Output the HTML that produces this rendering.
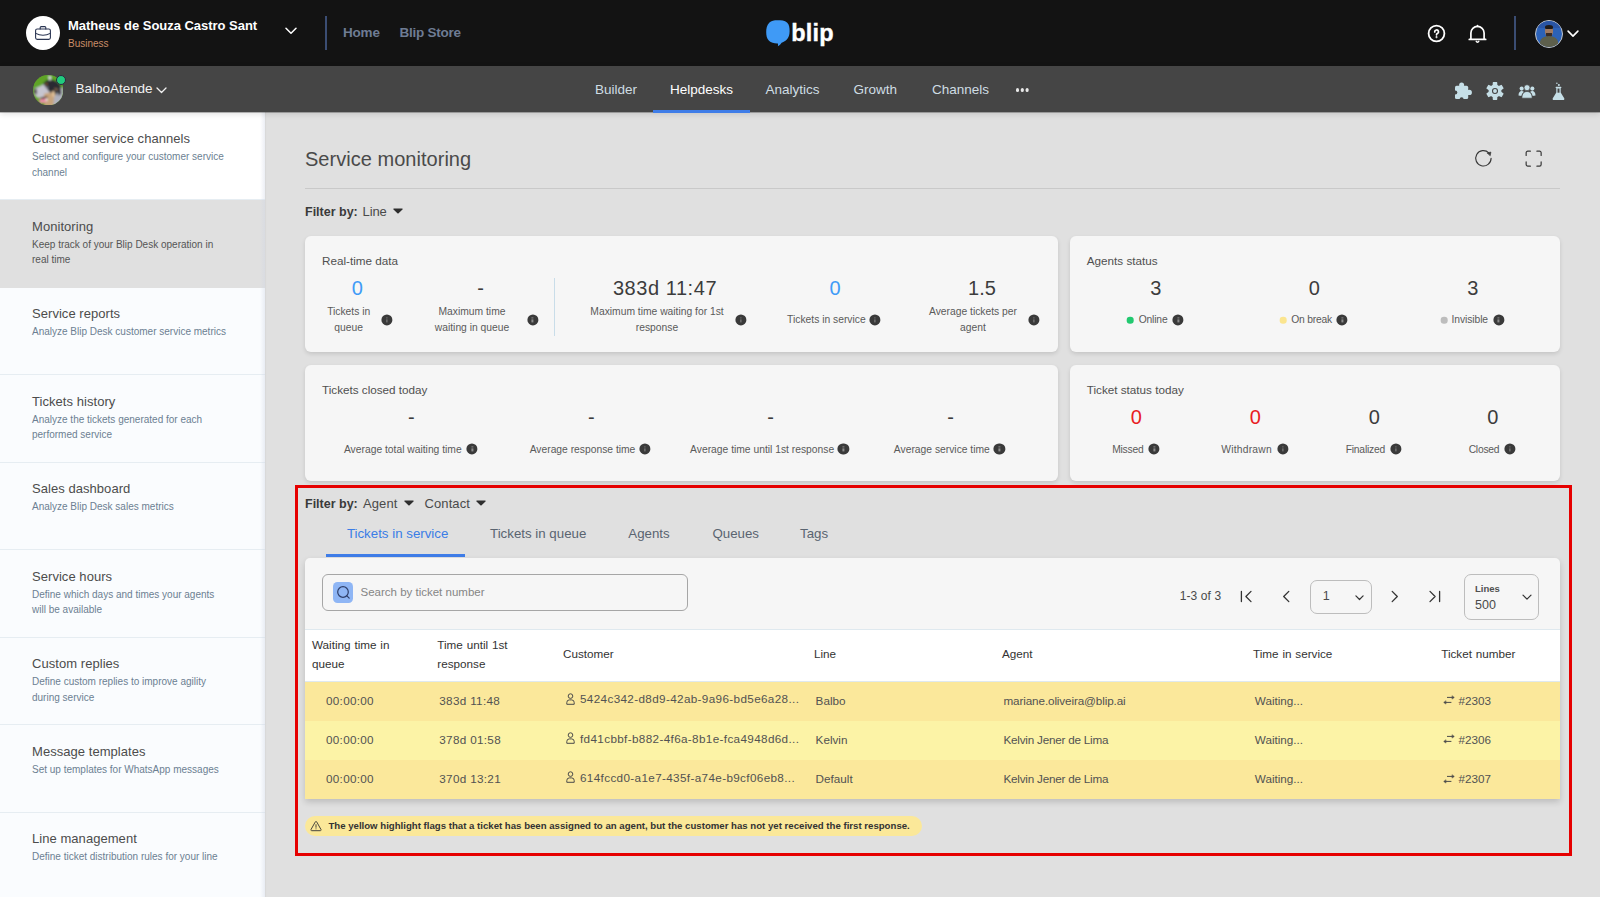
<!DOCTYPE html>
<html>
<head>
<meta charset="utf-8">
<title>Service monitoring</title>
<style>
*{box-sizing:border-box;margin:0;padding:0}
html,body{width:1600px;height:897px;overflow:hidden}
body{font-family:"Liberation Sans",sans-serif;background:#e0e0e0;color:#4a4a4a;position:relative}
.a{position:absolute;white-space:nowrap}
.c{position:absolute;white-space:nowrap;transform:translateX(-50%);text-align:center}
#top{position:absolute;left:0;top:0;width:1600px;height:66px;background:#131313}
#sub{position:absolute;left:0;top:66px;width:1600px;height:46.400px;background:#454545;box-shadow:0 .5px 0 rgba(0,0,0,.5),0 2px 6px rgba(0,0,0,.13);z-index:5}
#side{position:absolute;left:0;top:112px;width:265px;height:785px;background:#fafcfe;box-shadow:1px 0 1px rgba(0,0,0,.03)}
.si{position:absolute;left:0;width:265px;height:87.55px;border-bottom:1px solid #e6edf2}
.si .t{position:absolute;left:32px;top:18.5px;font-size:13px;line-height:16px;color:#4c4c4c;letter-spacing:.05px}
.si .d{position:absolute;left:32px;top:36.5px;font-size:10px;line-height:15.6px;color:#6c7f92;white-space:pre}
.card{position:absolute;background:#f6f6f6;border-radius:6px;box-shadow:0 2px 4px rgba(0,0,0,.12)}
.ct{font-size:11.7px;color:#505050}
.big{font-size:20px;color:#3c3c3c;line-height:24px}
.lbl{font-size:10.3px;color:#5a5a5a;line-height:16px}
.info{position:absolute;width:11.200px;height:11.200px;border-radius:50%;background:#3a3a3a;transform:translate(-50%,-50%)}
.info:before{content:"";position:absolute;left:4.900px;top:4.800px;width:1.500px;height:3.400px;background:#8c8c8c}
.info:after{content:"";position:absolute;left:4.900px;top:2.700px;width:1.500px;height:1.400px;background:#8c8c8c}
.dot{position:absolute;width:6.6px;height:6.6px;border-radius:50%;transform:translate(-50%,-50%)}
.tab{top:14.500px;font-size:13.500px;line-height:18px;color:#cfdde4}
.si.act .d{color:#555}
.si.act{border-bottom-color:#e0e0e0}
.caret{width:10px;height:6px;background:none}
</style>
</head>
<body>
<!-- TOP BAR -->
<div id="top">
  <div class="a" style="left:26px;top:16px;width:34px;height:34px;border-radius:50%;background:#fff"></div>
  <svg class="a" style="left:34px;top:24px" width="18" height="18" viewBox="0 0 18 18" fill="none" stroke="#2a3552" stroke-width="1.1" stroke-linecap="round" stroke-linejoin="round"><rect x="1.6" y="5" width="14.8" height="10.4" rx="1.6"/><path d="M6.2 5V3.6a1 1 0 0 1 1-1h3.6a1 1 0 0 1 1 1V5"/><path d="M1.8 9.4c2.2 1.3 4.6 1.9 7.2 1.9s5-.6 7.2-1.9"/></svg>
  <div class="a" style="left:68px;top:18px;font-size:13px;line-height:15px;font-weight:700;color:#fff;letter-spacing:-.03px">Matheus de Souza Castro Sant</div>
  <div class="a" style="left:68px;top:38px;font-size:10px;line-height:12px;color:#c98d68">Business</div>
  <svg class="a" style="left:285px;top:27px" width="12" height="8" viewBox="0 0 12 8" fill="none" stroke="#fff" stroke-width="1.5" stroke-linecap="round" stroke-linejoin="round"><path d="M1 1.2l5 5 5-5"/></svg>
  <div class="a" style="left:325px;top:16px;width:1.5px;height:34px;background:#3b4d73"></div>
  <div class="a" style="left:343px;top:24.7px;font-size:13.5px;line-height:16px;font-weight:700;color:#6e7c93;letter-spacing:-.2px">Home</div>
  <div class="a" style="left:399.5px;top:24.7px;font-size:13.5px;line-height:16px;font-weight:700;color:#6e7c93;letter-spacing:-.25px">Blip Store</div>
  <!-- logo -->
  <svg class="a" style="left:765px;top:19px" width="26" height="29" viewBox="0 0 26 29"><path d="M12.400 1.300c3.800 0 7.300.2 9.600 2.300 2.400 2.200 2.600 5.400 2.600 8.600 0 3.400-.8 6.300-3 8.500-1.500 1.500-3.300 2.400-5 3-.9 1.500-2.100 2.700-3.700 3.500.2-1 .2-1.900 0-2.800-3.600.1-6.800-.6-8.900-2.600C1.800 19.700 1.200 16.600 1.200 13c0-3.600.7-7 3-9.300C6.300 1.600 9.200 1.300 12.400 1.300z" fill="#3f9af6"/></svg>
  <div class="a" style="left:791.300px;top:18.200px;font-size:23.500px;line-height:30px;font-weight:700;color:#fff;letter-spacing:.15px;-webkit-text-stroke:.35px #fff">blip</div>
  <!-- right icons -->
  <svg class="a" style="left:1426.500px;top:23.500px" width="19" height="19" viewBox="0 0 19 19" fill="none" stroke="#fff" stroke-width="1.800"><circle cx="9.500" cy="9.500" r="7.900"/><path d="M7.700 7.900a1.900 1.900 0 1 1 2.700 1.700c-.6.300-.9.600-.9 1.200" stroke-width="1.700" stroke-linecap="round"/><circle cx="9.500" cy="13.100" r=".75" fill="#fff" stroke-width=".6"/></svg>
  <svg class="a" style="left:1467px;top:23px" width="21" height="21" viewBox="0 0 21 21" fill="none" stroke="#fff" stroke-width="1.700" stroke-linecap="round" stroke-linejoin="round"><path d="M3.900 15.900V10a6.600 6.600 0 0 1 13.200 0v5.900"/><path d="M2.300 16.400h16.400"/><path d="M9.200 18.300a1.400 1.400 0 0 0 2.600 0" stroke-width="1.400"/><path d="M10.500 2.500v.8"/></svg>
  <div class="a" style="left:1514px;top:16px;width:1.500px;height:34px;background:#3b4d73"></div>
  <div class="a" style="left:1535px;top:19.500px;width:28px;height:28px;border-radius:50%;background:#2c62b8;border:1.300px solid #c4c6c9;overflow:hidden">
    <div class="a" style="left:-2px;top:-2px;width:30px;height:9px;background:#2a55a4"></div>
    <div class="a" style="left:9px;top:5.500px;width:8px;height:10px;border-radius:45%;background:#a07a62"></div>
    <div class="a" style="left:9px;top:4.500px;width:8px;height:4px;border-radius:50% 50% 20% 20%;background:#1f1a18"></div>
    <div class="a" style="left:10px;top:12.500px;width:6px;height:3.500px;border-radius:0 0 50% 50%;background:#3a2c26"></div>
    <div class="a" style="left:4px;top:15.800px;width:18px;height:12px;border-radius:50% 50% 0 0;background:#5d5f4c"></div>
  </div>
  <svg class="a" style="left:1566.500px;top:30px" width="12" height="8" viewBox="0 0 12 8" fill="none" stroke="#fff" stroke-width="1.600" stroke-linecap="round" stroke-linejoin="round"><path d="M1.100 1.100l4.900 5 4.900-5"/></svg>
</div>
<!-- SUB BAR -->
<div id="sub">
  <!-- dog avatar -->
  <svg class="a" style="left:33px;top:8.700px" width="30.400" height="30.400" viewBox="0 0 30 30">
    <defs><clipPath id="dc"><circle cx="15" cy="15" r="15"/></clipPath><filter id="db" x="-10%" y="-10%" width="120%" height="120%"><feGaussianBlur stdDeviation=".8"/></filter></defs>
    <g clip-path="url(#dc)"><rect width="30" height="30" fill="#5d9f27"/>
    <g filter="url(#db)">
      <path d="M0 0h30v13H0z" fill="#5ea426"/>
      <path d="M1 13.500l7-3 4.500-2.500 3 3 3 6-2.500 5-7 1-5-.5-3-3.500z" fill="#c6c5d0"/>
      <path d="M1.500 14l1.800-.6.700 3.600-.8 2.500-1.700-1.500z" fill="#3a3536"/>
      <path d="M10 8.500l3-3 5-1 6 2 3.500 4 .5 8-3 3-4-1-4-3-4-5z" fill="#2a2c30"/>
      <path d="M12.500 8.300l1.300-.5.600 1.400-1.300.8z" fill="#b06a28"/>
      <path d="M15 1l1 4.500h1.500L18 1z" fill="#dcdce2"/>
      <path d="M11 18.500l6-1.500 5 3 1 5-3 6h-8l-2-5z" fill="#c8a47d"/>
      <path d="M18.700 16.500l2-1 1 3-.8 3.300-1.600-.5z" fill="#eccb9f"/>
      <path d="M5 24.800l6-2.300 3 1-.8 3.200-5.500 1.800z" fill="#ea90a6"/>
      <path d="M7.500 22.300l6.500-1.300.5 1.600-6.500 1.300z" fill="#4a2e2c"/>
      <path d="M12.600 23l1.400-.3.300 2.600-1.400.6z" fill="#f1f1f1"/>
      <path d="M21 21.500l3-4 2.500-5.500 3.500 1v13l-6 5-4-1z" fill="#b0b2be"/>
      <path d="M24 11.500l3-1 .8 8-2.800 2z" fill="#2c2d32"/>
      <path d="M21.500 12.500l3.500 1.500-.5 1.300-3.500-1z" fill="#8a6a4e"/>
      <circle cx="14.300" cy="12.200" r=".9" fill="#8d8fa0"/>
    </g></g>
  </svg>
  <div class="a" style="left:55.500px;top:9.300px;width:10px;height:10px;border-radius:50%;background:#21cb7e;border:1px solid #2b2840"></div>
  <div class="a" style="left:75.500px;top:14px;font-size:13.500px;line-height:18px;color:#f2f2f2;letter-spacing:-.02px">BalboAtende</div>
  <svg class="a" style="left:156px;top:21px" width="11" height="7" viewBox="0 0 11 7" fill="none" stroke="#f2f2f2" stroke-width="1.300" stroke-linecap="round" stroke-linejoin="round"><path d="M1 1l4.500 4.500L10 1"/></svg>
  <!-- tabs -->
  <div class="a tab" style="left:595px">Builder</div>
  <div class="a tab" style="left:670px;color:#fff">Helpdesks</div>
  <div class="a tab" style="left:765.500px">Analytics</div>
  <div class="a tab" style="left:853.500px">Growth</div>
  <div class="a tab" style="left:932px">Channels</div>
  <div class="a" style="left:653px;top:43.500px;width:96.500px;height:3px;background:#3f7de8"></div>
  <div class="a" style="left:1016px;top:22.200px;width:3.400px;height:3.400px;border-radius:50%;background:#e8e8e8;box-shadow:4.800px 0 0 #e8e8e8,9.600px 0 0 #e8e8e8"></div>
  <!-- right icons -->
  <svg class="a" style="left:1453.800px;top:15.800px" width="19" height="18" viewBox="0 0 19 18"><rect x="1" y="3.800" width="13.200" height="13.200" rx="1.600" fill="#c6dfe7"/><circle cx="7.600" cy="3" r="2.500" fill="#c6dfe7"/><circle cx="15.300" cy="10.400" r="2.600" fill="#c6dfe7"/><circle cx="1.300" cy="10.400" r="2" fill="#454545"/><circle cx="7.600" cy="17.300" r="2" fill="#454545"/></svg>
  <svg class="a" style="left:1486px;top:15.900px" width="18" height="18" viewBox="0 0 18 18"><path d="M7.28 3.36L7.40 0.75L10.60 0.75L10.72 3.36L13.02 4.69L15.34 3.49L16.94 6.27L14.75 7.67L14.75 10.33L16.94 11.73L15.34 14.51L13.02 13.31L10.72 14.64L10.60 17.25L7.40 17.25L7.28 14.64L4.98 13.31L2.66 14.51L1.06 11.73L3.25 10.33L3.25 7.67L1.06 6.27L2.66 3.49L4.98 4.69z" fill="#c6dfe7" stroke="#c6dfe7" stroke-width="1.300" stroke-linejoin="round"/><circle cx="9" cy="9" r="2.500" fill="#c6dfe7" stroke="#454545" stroke-width="1.100"/></svg>
  <svg class="a" style="left:1518px;top:17.500px" width="18" height="15" viewBox="0 0 18 15" fill="#c6dfe7"><circle cx="3.700" cy="4.600" r="2.100"/><path d="M.5 11.600c0-2.800 1.300-4.500 3.200-4.500 1 0 1.700.4 2.200 1-1.400 1-2.200 2.400-2.400 4z"/><circle cx="14.300" cy="4.600" r="2.100"/><path d="M17.500 11.600c0-2.800-1.300-4.500-3.200-4.500-1 0-1.700.4-2.200 1 1.400 1 2.200 2.400 2.400 4z"/><circle cx="9" cy="3.700" r="3" stroke="#454545" stroke-width=".7"/><path d="M3.900 13.500c0-3.800 2.100-6 5.100-6s5.100 2.200 5.100 6c0 .4-.2.700-.6.700H4.500c-.4 0-.6-.3-.6-.7z" stroke="#454545" stroke-width=".7"/></svg>
  <svg class="a" style="left:1551.500px;top:15.500px" width="13" height="19" viewBox="0 0 13 19"><path d="M4.300 5.400h4.400v5l3.500 5.900c.5.900 0 1.800-1 1.800H1.800c-1 0-1.500-.9-1-1.800l3.500-5.900z" fill="#c6dfe7"/><rect x="5.500" y="6.500" width="2" height="4.200" fill="#454545"/><rect x="3.600" y="4.800" width="5.800" height="1.300" rx=".6" fill="#c6dfe7"/><circle cx="4.900" cy="1.200" r=".75" fill="#c6dfe7"/><circle cx="6.900" cy="3" r="1" fill="#c6dfe7"/></svg>
</div>
<!-- SIDEBAR -->
<div id="side">
  <div class="si" style="top:0.45px;background:#fff"><div class="t">Customer service channels</div><div class="d">Select and configure your customer service
channel</div></div>
  <div class="si act" style="top:88.00px;background:#e0e0e0"><div class="t">Monitoring</div><div class="d">Keep track of your Blip Desk operation in
real time</div></div>
  <div class="si" style="top:175.55px"><div class="t">Service reports</div><div class="d">Analyze Blip Desk customer service metrics</div></div>
  <div class="si" style="top:263.10px"><div class="t">Tickets history</div><div class="d">Analyze the tickets generated for each
performed service</div></div>
  <div class="si" style="top:350.65px"><div class="t">Sales dashboard</div><div class="d">Analyze Blip Desk sales metrics</div></div>
  <div class="si" style="top:438.20px"><div class="t">Service hours</div><div class="d">Define which days and times your agents
will be available</div></div>
  <div class="si" style="top:525.75px"><div class="t">Custom replies</div><div class="d">Define custom replies to improve agility
during service</div></div>
  <div class="si" style="top:613.30px"><div class="t">Message templates</div><div class="d">Set up templates for WhatsApp messages</div></div>
  <div class="si" style="top:700.85px"><div class="t">Line management</div><div class="d">Define ticket distribution rules for your line</div></div>
</div>
<div class="a" style="left:260px;top:112px;width:5px;height:785px;background:linear-gradient(to right,rgba(205,212,228,0),rgba(205,212,228,.38));z-index:2"></div>
<!-- MAIN -->
<div id="main">
  <div class="a" style="left:305px;top:146.700px;font-size:20px;line-height:24px;color:#4a4a4a;letter-spacing:.03px">Service monitoring</div>
  <svg class="a" style="left:1473px;top:148px" width="21" height="21" viewBox="0 0 21 21" fill="none" stroke="#383838" stroke-width="1.150" stroke-linecap="round" stroke-linejoin="round"><path d="M18.100 10.300a7.700 7.700 0 1 1-2.300-5.500"/><path d="M14.300 4.900l3.600-.9-.6 3.500z" fill="#383838" stroke-width=".6"/></svg>
  <svg class="a" style="left:1524.600px;top:149.600px" width="17.300" height="17.300" viewBox="0 0 18 18" fill="none" stroke="#383838" stroke-width="1.250" stroke-linecap="round" stroke-linejoin="round"><path d="M1.200 5.600V2.900a1.700 1.700 0 0 1 1.700-1.700h2.700M12.400 1.200h2.700a1.700 1.700 0 0 1 1.700 1.700v2.700M16.800 12.400v2.700a1.700 1.700 0 0 1-1.700 1.700h-2.700M5.600 16.800H2.900a1.700 1.700 0 0 1-1.700-1.700v-2.700"/></svg>
  <div class="a" style="left:305px;top:188px;width:1255px;height:1px;background:#c9c9c9"></div>
  <div class="a" style="left:305px;top:203.500px;font-size:12.500px;line-height:16px;color:#4a4a4a"><b style="color:#3a3a3a">Filter by:</b></div>
  <div class="a" style="left:362.500px;top:203.500px;font-size:13px;line-height:16px;color:#4a4a4a;letter-spacing:-.1px">Line</div>
  <svg class="a" style="left:392.7px;top:207.5px" width="10" height="6" viewBox="0 0 10 6"><path d="M1 .4h8a.7.700 0 0 1 .5 1.200L5.600 5.300a.85.850 0 0 1-1.200 0L.5 1.600A.7.700 0 0 1 1 .4z" fill="#2e2e2e"/></svg>
  <!-- CARDS -->
  <div class="card" style="left:305px;top:236px;width:752.500px;height:116px"></div>
  <div class="a ct" style="left:322px;top:254px">Real-time data</div>
  <div class="c big" style="left:357.2px;top:276px;color:#3f9bf7">0</div>
  <div class="c big" style="left:480.5px;top:276px">-</div>
  <div class="c big" style="left:665px;top:276px;letter-spacing:.55px">383d 11:47</div>
  <div class="c big" style="left:835px;top:276px;color:#3f9bf7">0</div>
  <div class="c big" style="left:982px;top:276px">1.5</div>
  <div class="c lbl" style="left:348.7px;top:304.400px">Tickets in<br>queue</div>
  <i class="info" style="left:386.7px;top:320px"></i>
  <div class="c lbl" style="left:472px;top:304.400px">Maximum time<br>waiting in queue</div>
  <i class="info" style="left:532.5px;top:320px"></i>
  <div class="a" style="left:554px;top:278px;width:1px;height:58px;background:#c9dde9"></div>
  <div class="c lbl" style="left:657px;top:304.400px">Maximum time waiting for 1st<br>response</div>
  <i class="info" style="left:740.7px;top:320px"></i>
  <div class="c lbl" style="left:826.4px;top:311.5px">Tickets in service</div>
  <i class="info" style="left:875px;top:320px"></i>
  <div class="c lbl" style="left:973px;top:304.400px">Average tickets per<br>agent</div>
  <i class="info" style="left:1034px;top:320px"></i>
  <div class="card" style="left:1070px;top:236px;width:490px;height:116px"></div>
  <div class="a ct" style="left:1086.800px;top:254px">Agents status</div>
  <div class="c big" style="left:1155.9px;top:276px">3</div>
  <div class="c big" style="left:1314.4px;top:276px">0</div>
  <div class="c big" style="left:1472.8px;top:276px">3</div>
  <i class="dot" style="left:1130.4px;top:320px;background:#22c970"></i>
  <div class="a lbl" style="left:1138.7px;top:311.5px;letter-spacing:-0.17px">Online</div>
  <i class="info" style="left:1178.2px;top:320px"></i>
  <i class="dot" style="left:1283px;top:320px;background:#fbe58f"></i>
  <div class="a lbl" style="left:1291.3px;top:311.5px;letter-spacing:-0.2px">On break</div>
  <i class="info" style="left:1342.2px;top:320px"></i>
  <i class="dot" style="left:1444px;top:320px;background:#bdbdbd"></i>
  <div class="a lbl" style="left:1451.5px;top:311.5px;letter-spacing:-0.08px">Invisible</div>
  <i class="info" style="left:1498.6px;top:320px"></i>
  <div class="card" style="left:305px;top:365px;width:752.500px;height:116px"></div>
  <div class="a ct" style="left:322px;top:383px">Tickets closed today</div>
  <div class="c big" style="left:411.4px;top:405px">-</div>
  <div class="c big" style="left:591.3px;top:405px">-</div>
  <div class="c big" style="left:770.7px;top:405px">-</div>
  <div class="c big" style="left:950.6px;top:405px">-</div>
  <div class="c lbl" style="left:402.8px;top:441.800px">Average total waiting time</div>
  <i class="info" style="left:472.3px;top:449.3px"></i>
  <div class="c lbl" style="left:582.5px;top:441.800px">Average response time</div>
  <i class="info" style="left:645px;top:449.3px"></i>
  <div class="c lbl" style="left:762.1500000000001px;top:441.800px">Average time until 1st response</div>
  <i class="info" style="left:843.4px;top:449.3px"></i>
  <div class="c lbl" style="left:941.85px;top:441.800px">Average service time</div>
  <i class="info" style="left:999.4px;top:449.3px"></i>
  <div class="card" style="left:1070px;top:365px;width:490px;height:116px"></div>
  <div class="a ct" style="left:1086.800px;top:383px">Ticket status today</div>
  <div class="c big" style="left:1136.3px;top:405px;color:#e8201f">0</div>
  <div class="c big" style="left:1255.2px;top:405px;color:#e8201f">0</div>
  <div class="c big" style="left:1374.2px;top:405px">0</div>
  <div class="c big" style="left:1492.8px;top:405px">0</div>
  <div class="c lbl" style="left:1127.85px;top:441.900px;letter-spacing:-0.2px">Missed</div>
  <i class="info" style="left:1154.2px;top:449.3px"></i>
  <div class="c lbl" style="left:1246.6px;top:441.900px;letter-spacing:.23px">Withdrawn</div>
  <i class="info" style="left:1283px;top:449.3px"></i>
  <div class="c lbl" style="left:1365.4px;top:441.900px;letter-spacing:-0.19px">Finalized</div>
  <i class="info" style="left:1395.8px;top:449.3px"></i>
  <div class="c lbl" style="left:1484.0px;top:441.900px;letter-spacing:-0.23px">Closed</div>
  <i class="info" style="left:1510px;top:449.3px"></i>
  <!-- LOWER -->
  <div class="a" style="left:295px;top:485.200px;width:1276.700px;height:370.600px;border:3px solid #e60000"></div>
  <div class="a" style="left:305px;top:495.500px;font-size:12.500px;line-height:16px;color:#3a3a3a;font-weight:700">Filter by:</div>
  <div class="a" style="left:363px;top:495.500px;font-size:13px;line-height:16px;color:#4a4a4a;letter-spacing:.1px">Agent</div>
  <svg class="a" style="left:404px;top:500.3px" width="10" height="6" viewBox="0 0 10 6"><path d="M1 .4h8a.7.700 0 0 1 .5 1.200L5.600 5.300a.85.850 0 0 1-1.200 0L.5 1.600A.7.700 0 0 1 1 .4z" fill="#2e2e2e"/></svg>
  <div class="a" style="left:424.500px;top:495.500px;font-size:13px;line-height:16px;color:#4a4a4a;letter-spacing:.1px">Contact</div>
  <svg class="a" style="left:476.3px;top:500.3px" width="10" height="6" viewBox="0 0 10 6"><path d="M1 .4h8a.7.700 0 0 1 .5 1.200L5.600 5.300a.85.850 0 0 1-1.200 0L.5 1.600A.7.700 0 0 1 1 .4z" fill="#2e2e2e"/></svg>
  <div class="a" style="left:346.9px;top:525px;font-size:13.300px;line-height:18px;color:#3a7de6">Tickets in service</div>
  <div class="a" style="left:490px;top:525px;font-size:13.300px;line-height:18px;color:#5a6470">Tickets in queue</div>
  <div class="a" style="left:628.3px;top:525px;font-size:13.300px;line-height:18px;color:#5a6470">Agents</div>
  <div class="a" style="left:712.4px;top:525px;font-size:13.300px;line-height:18px;color:#5a6470">Queues</div>
  <div class="a" style="left:800px;top:525px;font-size:13.300px;line-height:18px;color:#5a6470">Tags</div>
  <div class="a" style="left:326px;top:554.200px;width:139px;height:3px;background:#3f7de8"></div>
  <div class="card" style="left:305px;top:557.500px;width:1255px;height:241.500px;border-radius:5px 5px 0 0;box-shadow:0 3px 6px rgba(0,0,0,.16)"></div>
  <div class="a" style="left:322px;top:574px;width:366px;height:37px;border:1px solid #a6a6a6;border-radius:6px"></div>
  <div class="a" style="left:332.500px;top:582px;width:20.500px;height:20.500px;border-radius:4.500px;background:#8fb6f5"></div>
  <svg class="a" style="left:335.500px;top:585px" width="15" height="15" viewBox="0 0 15 15" fill="none" stroke="#2f3f6a" stroke-width="1.200" stroke-linecap="round"><circle cx="7" cy="7" r="5.300"/><path d="M10.900 10.900l2.300 2.300"/></svg>
  <div class="a" style="left:360.500px;top:584px;font-size:11.500px;line-height:16px;color:#858585">Search by ticket number</div>
  <div class="a" style="left:1179.700px;top:587.700px;font-size:12px;letter-spacing:.1px;line-height:16px;color:#4a4a4a">1-3 of 3</div>
  <svg class="a" style="left:1240px;top:589.800px" width="13" height="13" viewBox="0 0 13 13" fill="none" stroke="#333" stroke-width="1.300" stroke-linecap="round" stroke-linejoin="round"><path d="M1.400 1.400v10.200M11 1.400L5.900 6.500l5.100 5.100"/></svg>
  <svg class="a" style="left:1282px;top:589.800px" width="9" height="13" viewBox="0 0 9 13" fill="none" stroke="#333" stroke-width="1.300" stroke-linecap="round" stroke-linejoin="round"><path d="M6.800 1.400L1.700 6.500l5.100 5.100"/></svg>
  <div class="a" style="left:1310px;top:580px;width:61.500px;height:34px;border:1px solid #bdbdbd;border-radius:7px"></div>
  <div class="a" style="left:1322.800px;top:588.300px;font-size:12.500px;line-height:16px;color:#4a4a4a">1</div>
  <svg class="a" style="left:1354.500px;top:594.500px" width="9" height="6" viewBox="0 0 9 6" fill="none" stroke="#333" stroke-width="1.200" stroke-linecap="round" stroke-linejoin="round"><path d="M.9.900l3.600 3.600L8.100.9"/></svg>
  <svg class="a" style="left:1389.500px;top:589.800px" width="9" height="13" viewBox="0 0 9 13" fill="none" stroke="#333" stroke-width="1.300" stroke-linecap="round" stroke-linejoin="round"><path d="M2.200 1.400l5.100 5.100-5.100 5.100"/></svg>
  <svg class="a" style="left:1428px;top:589.800px" width="13" height="13" viewBox="0 0 13 13" fill="none" stroke="#333" stroke-width="1.300" stroke-linecap="round" stroke-linejoin="round"><path d="M11.600 1.400v10.200M2 1.400l5.100 5.100L2 11.600"/></svg>
  <div class="a" style="left:1464px;top:574px;width:75px;height:46px;border:1px solid #bdbdbd;border-radius:7px"></div>
  <div class="a" style="left:1475px;top:582.500px;font-size:9.500px;line-height:12px;font-weight:700;color:#505050">Lines</div>
  <div class="a" style="left:1475px;top:596.500px;font-size:12.500px;line-height:16px;color:#4a4a4a">500</div>
  <svg class="a" style="left:1522px;top:594px" width="10" height="7" viewBox="0 0 10 7" fill="none" stroke="#333" stroke-width="1.200" stroke-linecap="round" stroke-linejoin="round"><path d="M1 1.200l4 4 4-4"/></svg>
  <div class="a" style="left:305px;top:629px;width:1255px;height:52.500px;background:#fff;border-top:1px solid #dfe9ef;border-bottom:1px solid #dfe9ef"></div>
  <div class="a" style="left:312px;top:636px;font-size:11.700px;line-height:18.600px;color:#333;word-spacing:.6px">Waiting time in<br>queue</div>
  <div class="a" style="left:437.300px;top:636px;font-size:11.700px;line-height:18.600px;color:#333;word-spacing:.6px">Time until 1st<br>response</div>
  <div class="a" style="left:563px;top:645.300px;font-size:11.700px;line-height:18.600px;color:#333;word-spacing:.6px">Customer</div>
  <div class="a" style="left:814px;top:645.300px;font-size:11.700px;line-height:18.600px;color:#333;word-spacing:.6px">Line</div>
  <div class="a" style="left:1002px;top:645.300px;font-size:11.700px;line-height:18.600px;color:#333;word-spacing:.6px">Agent</div>
  <div class="a" style="left:1253px;top:645.300px;font-size:11.700px;line-height:18.600px;color:#333;word-spacing:.6px">Time in service</div>
  <div class="a" style="left:1441.2px;top:645.300px;font-size:11.700px;line-height:18.600px;color:#333;word-spacing:.6px">Ticket number</div>
  <div class="a" style="left:305px;top:681.5px;width:1255px;height:39.3px;background:#fbe89b"></div>
  <div class="a" style="left:326px;top:693.1px;font-size:11.700px;line-height:16px;color:#525252;letter-spacing:.3px">00:00:00</div>
  <div class="a" style="left:439.300px;top:693.1px;font-size:11.700px;line-height:16px;color:#525252;letter-spacing:.32px">383d 11:48</div>
  <svg class="a" style="left:566px;top:692.7px" width="9" height="12" viewBox="0 0 9 12" fill="none" stroke="#4a4a4a" stroke-width="1"><circle cx="4.500" cy="3.100" r="2.300"/><path d="M.8 11.300v-1.800a2.600 2.600 0 0 1 2.600-2.600h2.200a2.600 2.600 0 0 1 2.600 2.600v1.800z" stroke-linejoin="round"/></svg>
  <div class="a" style="left:580px;top:691.4px;font-size:11.700px;line-height:16px;color:#525252;letter-spacing:.36px">5424c342-d8d9-42ab-9a96-bd5e6a28...</div>
  <div class="a" style="left:815.600px;top:693.1px;font-size:11.700px;line-height:16px;color:#525252">Balbo</div>
  <div class="a" style="left:1003.500px;top:693.1px;font-size:11.700px;line-height:16px;color:#525252;letter-spacing:-.12px">mariane.oliveira@blip.ai</div>
  <div class="a" style="left:1254.800px;top:693.1px;font-size:11.700px;line-height:16px;color:#525252">Waiting...</div>
  <svg class="a" style="left:1443px;top:695.2px" width="12" height="10" viewBox="0 0 12 10" fill="none" stroke="#4a4a4a" stroke-width="1" stroke-linecap="round" stroke-linejoin="round"><path d="M4.400 2.400h5.200M2.400 7.400h5.600"/><path d="M9.300 .9l2 1.500-2 1.500zM2.700 5.900l-2 1.500 2 1.500z" fill="#4a4a4a" stroke-width=".5"/></svg>
  <div class="a" style="left:1458.600px;top:693.1px;font-size:11.700px;line-height:16px;color:#525252">#2303</div>
  <div class="a" style="left:305px;top:720.8px;width:1255px;height:39.2px;background:#fcf3a6"></div>
  <div class="a" style="left:326px;top:732.3px;font-size:11.700px;line-height:16px;color:#525252;letter-spacing:.3px">00:00:00</div>
  <div class="a" style="left:439.300px;top:732.3px;font-size:11.700px;line-height:16px;color:#525252;letter-spacing:.32px">378d 01:58</div>
  <svg class="a" style="left:566px;top:731.9px" width="9" height="12" viewBox="0 0 9 12" fill="none" stroke="#4a4a4a" stroke-width="1"><circle cx="4.500" cy="3.100" r="2.300"/><path d="M.8 11.300v-1.800a2.600 2.600 0 0 1 2.600-2.600h2.200a2.600 2.600 0 0 1 2.600 2.600v1.800z" stroke-linejoin="round"/></svg>
  <div class="a" style="left:580px;top:730.7px;font-size:11.700px;line-height:16px;color:#525252;letter-spacing:.36px">fd41cbbf-b882-4f6a-8b1e-fca4948d6d...</div>
  <div class="a" style="left:815.600px;top:732.3px;font-size:11.700px;line-height:16px;color:#525252">Kelvin</div>
  <div class="a" style="left:1003.500px;top:732.3px;font-size:11.700px;line-height:16px;color:#525252;letter-spacing:-.22px">Kelvin Jener de Lima</div>
  <div class="a" style="left:1254.800px;top:732.3px;font-size:11.700px;line-height:16px;color:#525252">Waiting...</div>
  <svg class="a" style="left:1443px;top:734.4px" width="12" height="10" viewBox="0 0 12 10" fill="none" stroke="#4a4a4a" stroke-width="1" stroke-linecap="round" stroke-linejoin="round"><path d="M4.400 2.400h5.200M2.400 7.400h5.600"/><path d="M9.300 .9l2 1.500-2 1.500zM2.700 5.900l-2 1.500 2 1.500z" fill="#4a4a4a" stroke-width=".5"/></svg>
  <div class="a" style="left:1458.600px;top:732.3px;font-size:11.700px;line-height:16px;color:#525252">#2306</div>
  <div class="a" style="left:305px;top:760px;width:1255px;height:39px;background:#fbe89b"></div>
  <div class="a" style="left:326px;top:771.4px;font-size:11.700px;line-height:16px;color:#525252;letter-spacing:.3px">00:00:00</div>
  <div class="a" style="left:439.300px;top:771.4px;font-size:11.700px;line-height:16px;color:#525252;letter-spacing:.32px">370d 13:21</div>
  <svg class="a" style="left:566px;top:771.0px" width="9" height="12" viewBox="0 0 9 12" fill="none" stroke="#4a4a4a" stroke-width="1"><circle cx="4.500" cy="3.100" r="2.300"/><path d="M.8 11.300v-1.800a2.600 2.600 0 0 1 2.600-2.600h2.200a2.600 2.600 0 0 1 2.600 2.600v1.800z" stroke-linejoin="round"/></svg>
  <div class="a" style="left:580px;top:769.8px;font-size:11.700px;line-height:16px;color:#525252;letter-spacing:.36px">614fccd0-a1e7-435f-a74e-b9cf06eb8...</div>
  <div class="a" style="left:815.600px;top:771.4px;font-size:11.700px;line-height:16px;color:#525252">Default</div>
  <div class="a" style="left:1003.500px;top:771.4px;font-size:11.700px;line-height:16px;color:#525252;letter-spacing:-.22px">Kelvin Jener de Lima</div>
  <div class="a" style="left:1254.800px;top:771.4px;font-size:11.700px;line-height:16px;color:#525252">Waiting...</div>
  <svg class="a" style="left:1443px;top:773.5px" width="12" height="10" viewBox="0 0 12 10" fill="none" stroke="#4a4a4a" stroke-width="1" stroke-linecap="round" stroke-linejoin="round"><path d="M4.400 2.400h5.200M2.400 7.400h5.600"/><path d="M9.300 .9l2 1.500-2 1.500zM2.700 5.900l-2 1.500 2 1.500z" fill="#4a4a4a" stroke-width=".5"/></svg>
  <div class="a" style="left:1458.600px;top:771.4px;font-size:11.700px;line-height:16px;color:#525252">#2307</div>
  <div class="a" style="left:305px;top:816px;width:616.500px;height:20px;border-radius:10px;background:#fbe899"></div>
  <svg class="a" style="left:309.500px;top:820px" width="12" height="12" viewBox="0 0 12 12" fill="none" stroke="#333" stroke-width=".9" stroke-linejoin="round" stroke-linecap="round"><path d="M5.300 1.900a.8.800 0 0 1 1.400 0l4.300 7.600a.8.800 0 0 1-.7 1.200H1.700a.8.800 0 0 1-.7-1.200z"/><path d="M6 4.700v2.600M6 8.800v.1"/></svg>
  <div class="a" style="left:328.400px;top:820px;font-size:9.650px;line-height:12px;font-weight:700;color:#333">The yellow highlight flags that a ticket has been assigned to an agent, but the customer has not yet received the first response.</div>
</div>
</body>
</html>
